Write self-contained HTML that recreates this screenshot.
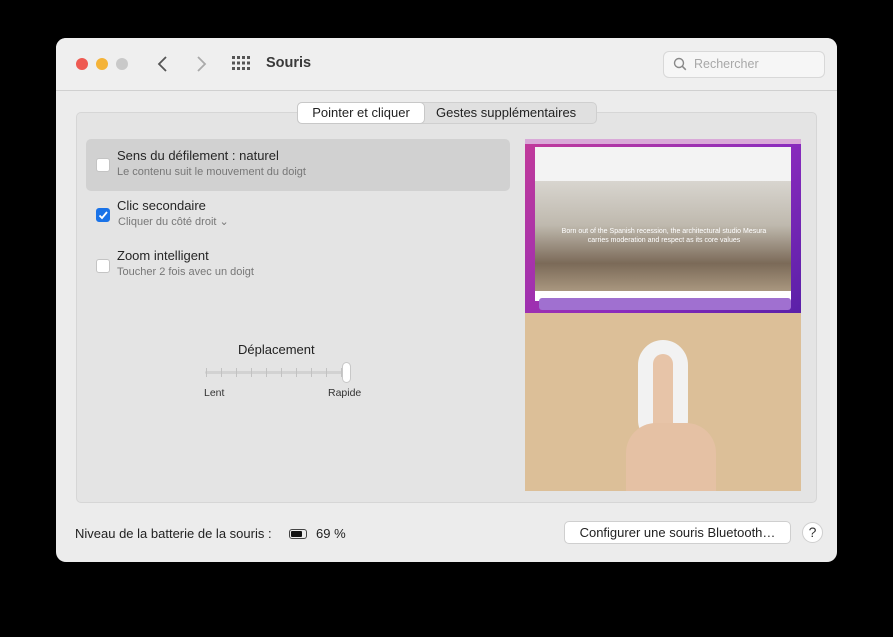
<!DOCTYPE html>
<html><head><meta charset="utf-8"><style>
*{margin:0;padding:0;box-sizing:border-box}
body{width:893px;height:637px;background:#000;font-family:"Liberation Sans",sans-serif;position:relative;overflow:hidden;color:#262626}
.win{position:absolute;left:56px;top:38px;width:781px;height:524px;background:#ececec;border-radius:10px;overflow:hidden}
.tb{position:absolute;left:0;top:0;width:781px;height:53px;background:#efefef;border-bottom:1px solid #d0d0d0}
.dot{position:absolute;top:20px;width:12px;height:12px;border-radius:50%}
.a{position:absolute;white-space:nowrap}
.box{position:absolute;left:20px;top:74px;width:741px;height:391px;background:#e4e4e4;border:1px solid #d6d6d6;border-radius:5px}
.cb{position:absolute;width:14px;height:14px;border-radius:3px;background:#fff;border:1px solid #c4c4c4}
.t1{font-size:13px;color:#262626}
.t2{font-size:11px;color:#777}
</style></head><body>
<div class="win">
<div class="tb">
<div class="dot" style="left:20px;background:#ee5a52"></div>
<div class="dot" style="left:40px;background:#f4b338"></div>
<div class="dot" style="left:60px;background:#c9c9c9"></div>
<svg class="a" style="left:100px;top:17px" width="14" height="18"><path d="M10 2L3 9l7 7" stroke="#555" stroke-width="1.8" fill="none"/></svg>
<svg class="a" style="left:138px;top:17px" width="14" height="18"><path d="M4 2l7 7-7 7" stroke="#aaa" stroke-width="1.8" fill="none"/></svg>
<svg class="a" style="left:176px;top:18px" width="19" height="15" fill="#555">
<g><rect x="0" y="0" width="3" height="3"/><rect x="5" y="0" width="3" height="3"/><rect x="10" y="0" width="3" height="3"/><rect x="15" y="0" width="3" height="3"/>
<rect x="0" y="5.5" width="3" height="3"/><rect x="5" y="5.5" width="3" height="3"/><rect x="10" y="5.5" width="3" height="3"/><rect x="15" y="5.5" width="3" height="3"/>
<rect x="0" y="11" width="3" height="3"/><rect x="5" y="11" width="3" height="3"/><rect x="10" y="11" width="3" height="3"/><rect x="15" y="11" width="3" height="3"/></g></svg>
<div class="a" style="left:210px;top:17px;font-size:14.5px;font-weight:bold;color:#3a3a3a">Souris</div>
<div class="a" style="left:607px;top:13px;width:162px;height:27px;background:#f6f6f6;border:1px solid #d8d8d8;border-radius:6px"></div>
<svg class="a" style="left:617px;top:19px" width="14" height="14"><circle cx="6" cy="6" r="4.5" stroke="#888" stroke-width="1.4" fill="none"/><path d="M9.3 9.3l3.5 3.5" stroke="#888" stroke-width="1.5"/></svg>
<div class="a" style="left:638px;top:19px;font-size:12.5px;color:#a8a8a8">Rechercher</div>
</div>
<div class="box"></div>
<div class="a" style="left:241px;top:64px;width:300px;height:22px;background:#e0e0e0;border:1px solid #cfcfcf;border-radius:5px"></div>
<div class="a" style="left:241px;top:64px;width:128px;height:22px;background:#fff;border:1px solid #c8c8c8;border-radius:5px;font-size:13px;text-align:center;line-height:20px;color:#222">Pointer et cliquer</div>
<div class="a" style="left:380px;top:67px;font-size:13px;color:#222">Gestes supplémentaires</div>

<div class="a" style="left:30px;top:101px;width:424px;height:52px;background:#d1d1d1;border-radius:5px"></div>
<div class="cb" style="left:40px;top:120px"></div>
<div class="a t1" style="left:61px;top:110px">Sens du défilement : naturel</div>
<div class="a t2" style="left:61px;top:128px">Le contenu suit le mouvement du doigt</div>
<div class="cb" style="left:40px;top:170px;background:#1a73e8;border-color:#1a73e8"><svg width="12" height="12" style="position:absolute;left:0;top:0"><path d="M2.5 6.5l2.5 2.5 5-6" stroke="#fff" stroke-width="1.8" fill="none"/></svg></div>
<div class="a t1" style="left:61px;top:160px">Clic secondaire</div>
<div class="a t2" style="left:62px;top:177px">Cliquer du côté droit ⌄</div>
<div class="cb" style="left:40px;top:221px"></div>
<div class="a t1" style="left:61px;top:210px">Zoom intelligent</div>
<div class="a t2" style="left:61px;top:228px">Toucher 2 fois avec un doigt</div>

<div class="a" style="left:182px;top:304px;font-size:13px;color:#222">Déplacement</div>
<div class="a" style="left:149px;top:333px;width:140px;height:3px;background:#d2d2d2;border-radius:2px"></div>
<svg class="a" style="left:149px;top:329px" width="140" height="12" stroke="#c2c2c2" stroke-width="1"><path d="M1.5 1v9M16.5 1v9M31.5 1v9M46.5 1v9M61.5 1v9M76.5 1v9M91.5 1v9M106.5 1v9M121.5 1v9M136.5 1v9"/></svg>
<div class="a" style="left:286px;top:324px;width:9px;height:21px;background:#fff;border:1px solid #c8c8c8;border-radius:5px"></div>
<div class="a" style="left:148px;top:349px;font-size:10.5px;color:#333">Lent</div>
<div class="a" style="left:272px;top:349px;font-size:10.5px;color:#333">Rapide</div>

<div class="a" style="left:469px;top:101px;width:276px;height:174px;background:linear-gradient(135deg,#c23a9a,#8a2bbd 60%,#5a20a8)"></div>
<div class="a" style="left:469px;top:101px;width:276px;height:5px;background:#d9a9d8"></div>
<div class="a" style="left:479px;top:109px;width:256px;height:34px;background:#f3f3f3"></div>
<div class="a" style="left:479px;top:143px;width:256px;height:110px;background:linear-gradient(180deg,#d8d5cf 0%,#bfb9ae 40%,#7b6a58 75%,#a9977f 100%)"></div>
<div class="a" style="left:500px;top:189px;width:216px;font-size:7px;line-height:9px;color:#fff;text-align:center;white-space:normal">Born out of the Spanish recession, the architectural studio Mesura carries moderation and respect as its core values</div>
<div class="a" style="left:479px;top:253px;width:256px;height:10px;background:#fff"></div>
<div class="a" style="left:483px;top:260px;width:252px;height:12px;background:#a070d0;border-radius:3px"></div>
<div class="a" style="left:469px;top:275px;width:276px;height:178px;background:#dcbf98"></div>
<div class="a" style="left:582px;top:302px;width:50px;height:105px;background:#f2f2f2;border-radius:25px"></div>
<div class="a" style="left:597px;top:316px;width:20px;height:80px;background:#e7c4a8;border-radius:10px"></div>
<div class="a" style="left:570px;top:385px;width:90px;height:68px;background:#e5c1a4;border-radius:30px 30px 0 0"></div>

<div class="a" style="left:19px;top:488px;font-size:13px;color:#222">Niveau de la batterie de la souris :</div>
<div class="a" style="left:233px;top:491px;width:18px;height:10px;border:1px solid #444;border-radius:3px;padding:1px"><div style="width:11px;height:6px;background:#111;border-radius:1px"></div></div>
<div class="a" style="left:260px;top:488px;font-size:13px;color:#222">69 %</div>
<div class="a" style="left:508px;top:483px;width:227px;height:23px;background:#fff;border:1px solid #cfcfcf;border-radius:5px;font-size:13px;text-align:center;line-height:21px;color:#222">Configurer une souris Bluetooth…</div>
<div class="a" style="left:746px;top:484px;width:21px;height:21px;background:#fff;border:1px solid #cfcfcf;border-radius:50%;font-size:14px;text-align:center;line-height:19px;color:#333">?</div>
</div>
</body></html>
